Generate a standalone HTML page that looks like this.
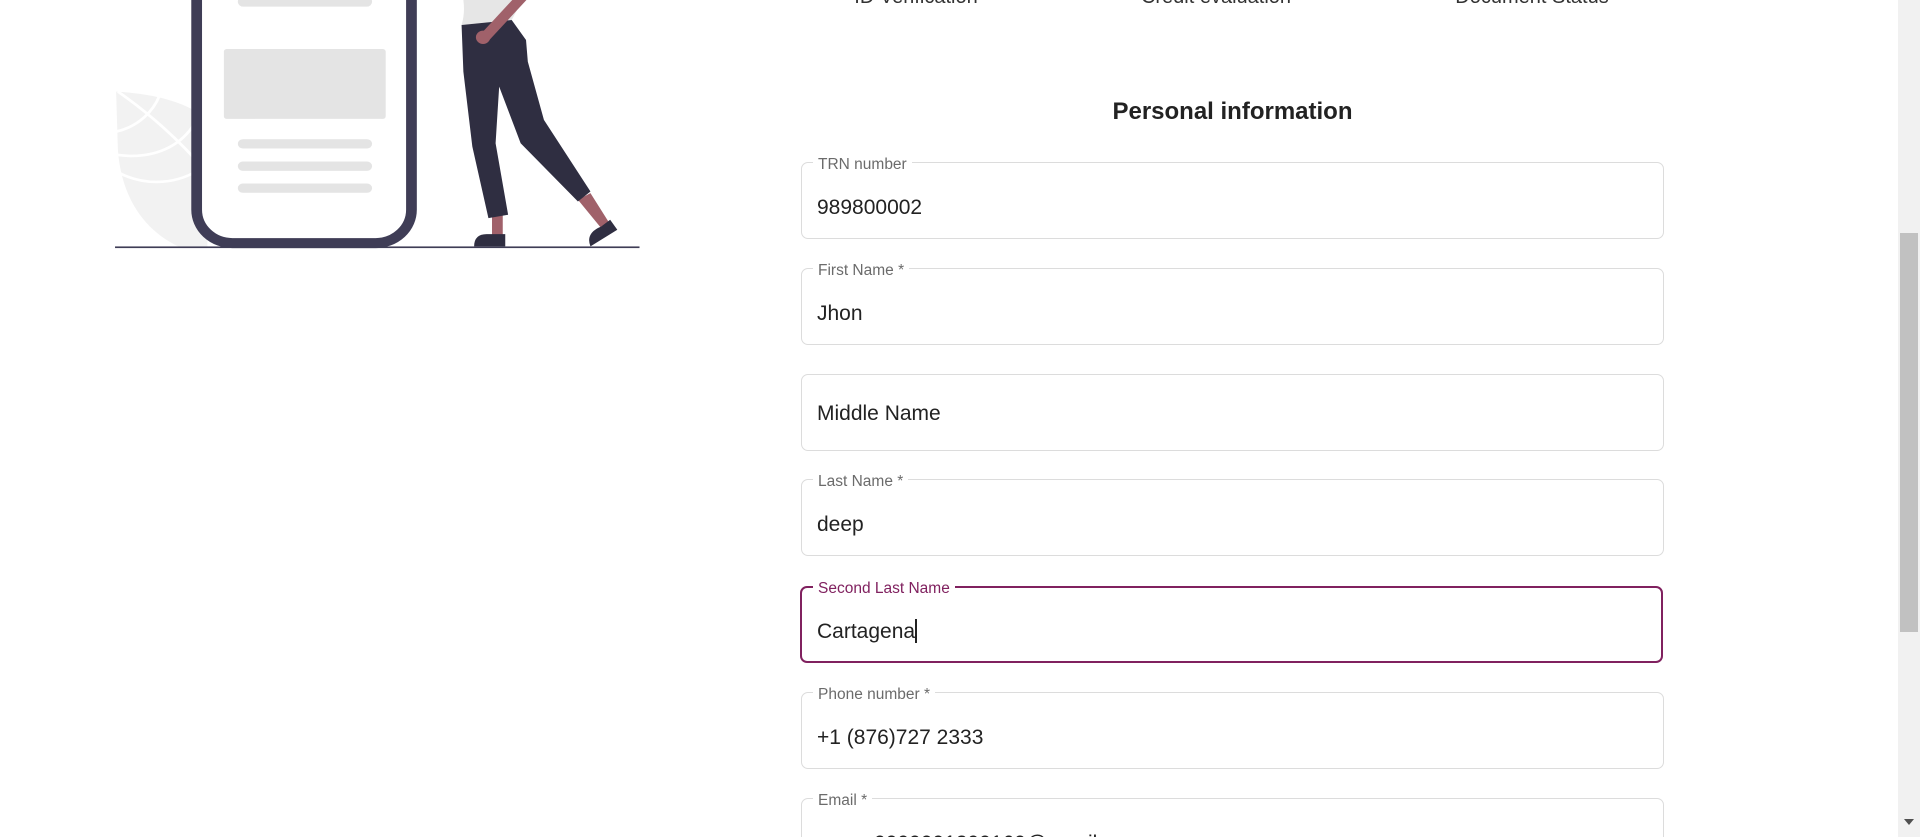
<!DOCTYPE html>
<html><head><meta charset="utf-8"><style>
html,body{margin:0;padding:0;width:1920px;height:837px;overflow:hidden;background:#fff;font-family:"Liberation Sans",Arial,sans-serif;}
#w{position:relative;width:1920px;height:837px;overflow:hidden}
.step{position:absolute;top:-14px;font-size:20px;color:#333;transform:translateX(-50%);white-space:nowrap}
h2{position:absolute;left:801px;width:863px;margin:0;top:98px;font-size:24px;font-weight:bold;color:#222;text-align:center}
.f{position:absolute;left:801px;width:861px;height:75px;border:1px solid #dcdcdc;border-radius:7px;box-sizing:content-box}
.f .l{position:absolute;left:11px;top:-7px;background:#fff;padding:0 5px;font-size:15.5px;color:#6b6b6b;line-height:18px}
.f .v{position:absolute;left:15px;top:33px;font-size:21px;color:#222;line-height:24px;white-space:nowrap}
.f.foc{border:2.5px solid #80215f;left:800px;width:859px;height:73px}
.f.foc .l{color:#80215f;top:-8px}
.sb{position:absolute;left:1898px;top:0;width:22px;height:837px;background:#f1f1f1}
.th{position:absolute;left:1900px;top:233px;width:18px;height:399px;background:#c1c1c1}
</style></head><body><div id="w">
<svg width="700" height="300" style="position:absolute;left:0;top:0" viewBox="0 0 700 300">
<g transform="translate(100,0) scale(0.358,0.333)">
<path d="M45,275 C200,285 270,330 300,360 L300,745 L230,745 C130,700 60,600 50,450 Z" fill="#f2f2f2"/>
<path d="M50,275 C150,350 230,430 300,520 M45,395 C110,380 150,330 165,290 M48,465 C150,480 230,440 270,360 M55,520 C130,560 220,555 290,500" stroke="#fff" stroke-width="8" fill="none"/>
<rect x="270" y="-100" width="600" height="830" rx="100" fill="#fff" stroke="#3f3d56" stroke-width="30"/>
<rect x="385" y="-10" width="375" height="30" rx="15" fill="#e4e4e4"/>
<rect x="346" y="147" width="452" height="210" rx="8" fill="#e4e4e4"/>
<rect x="385" y="418" width="375" height="28" rx="14" fill="#e4e4e4"/>
<rect x="385" y="485" width="375" height="28" rx="14" fill="#e4e4e4"/>
<rect x="385" y="551" width="375" height="28" rx="14" fill="#e4e4e4"/>
<rect x="42" y="740" width="1465" height="5" fill="#3f3d56"/>
<path d="M1015,0 L1180,0 L1150,60 L1010,75 Q1020,40 1015,0 Z" fill="#e6e6e6"/>
<path d="M1095,640 L1125,640 L1125,710 L1095,710 Z M1335,600 L1370,580 L1420,665 L1400,685 Z" fill="#a0616a"/>
<path d="M1010,75 L1150,60 L1190,120 L1195,185 L1240,360 L1370,575 L1335,605 L1175,430 L1115,260 L1105,430 L1140,645 L1085,655 L1040,440 L1015,215 Z" fill="#2f2e41"/>
<path d="M1045,740 Q1045,703 1080,703 L1132,703 L1132,740 Z M1370,740 Q1355,700 1400,680 L1425,660 L1445,690 Z" fill="#2f2e41"/>
<path d="M1180,-10 L1075,112" stroke="#a0616a" stroke-width="30"/>
<circle cx="1070" cy="112" r="20" fill="#a0616a"/>
</g></svg>
<div class="step" style="left:916px">ID Verification</div>
<div class="step" style="left:1216px">Credit evaluation</div>
<div class="step" style="left:1532px">Document Status</div>
<h2>Personal information</h2>
<div class="f" style="top:162px"><span class="l">TRN number</span><span class="v">989800002</span></div>
<div class="f" style="top:268px"><span class="l">First Name *</span><span class="v">Jhon</span></div>
<div class="f" style="top:374px"><span class="v" style="top:27px">Middle Name</span></div>
<div class="f" style="top:479px"><span class="l">Last Name *</span><span class="v">deep</span></div>
<div class="f foc" style="top:586px"><span class="l">Second Last Name</span><span class="v" style="top:31px">Cartagena<span style="display:inline-block;width:1.5px;height:24px;background:#222;vertical-align:-5px"></span></span></div>
<div class="f" style="top:692px"><span class="l">Phone number *</span><span class="v">+1 (876)727 2333</span></div>
<div class="f" style="top:798px"><span class="l">Email *</span><span class="v" style="left:72px">0000001200160@gmail.com</span></div>
<div class="sb"></div><div class="th"></div>
<div style="position:absolute;left:1904px;top:819px;width:0;height:0;border-left:5px solid transparent;border-right:5px solid transparent;border-top:6px solid #505050"></div>
</div></body></html>
